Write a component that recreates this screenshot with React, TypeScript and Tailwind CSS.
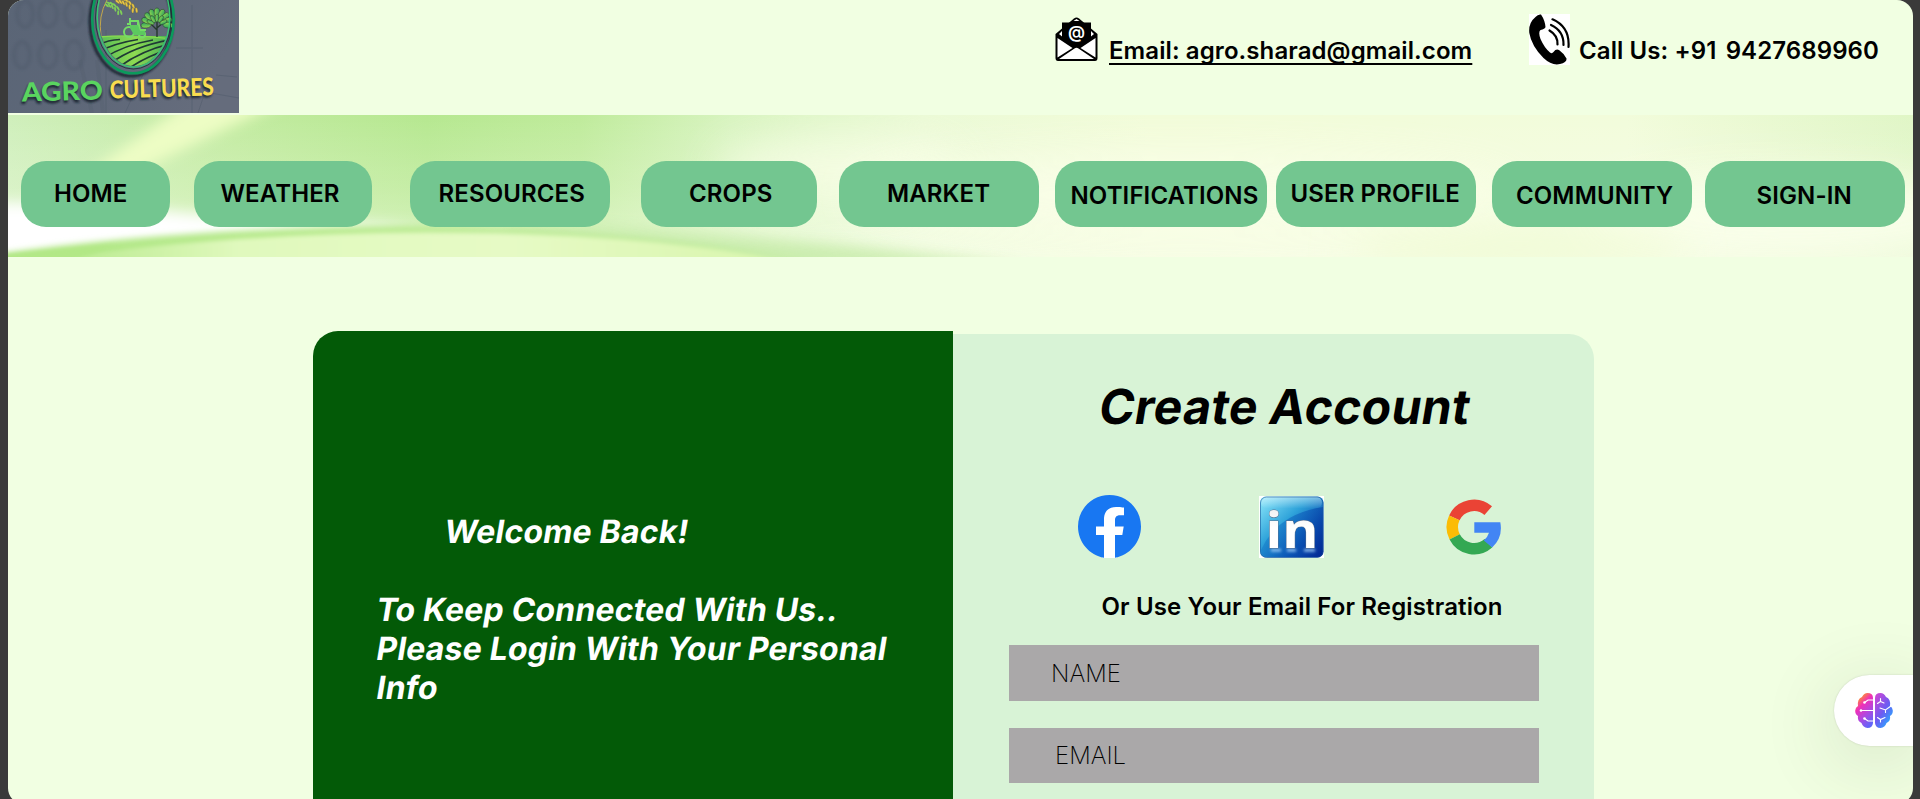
import React from "react";

type NavItem = { label: string; box: string };

const navItems: NavItem[] = [
  { label: "HOME", box: "w-[149px] ml-[13px] pl-[33px]" },
  { label: "WEATHER", box: "w-[178px] ml-[23.5px] pl-[27px]" },
  { label: "RESOURCES", box: "w-[200px] ml-[38px] pl-[29px]" },
  { label: "CROPS", box: "w-[176px] ml-[31.5px] pl-[48px]" },
  { label: "MARKET", box: "w-[200px] ml-[22px] pl-[48px]" },
  { label: "NOTIFICATIONS", box: "w-[212px] ml-[16px] pl-[15.5px] pt-[3px]" },
  { label: "USER PROFILE", box: "w-[200px] ml-[9px] pl-[14.5px]" },
  { label: "COMMUNITY", box: "w-[200px] ml-[16px] pl-[24px] pt-[3px]" },
  { label: "SIGN-IN", box: "w-[200px] ml-[12.5px] pl-[52px] pt-[3px]" },
];

function Logo() {
  return (
    <svg width="231" height="113" viewBox="8 0 231 113" className="block shrink-0">
      <defs>
        <linearGradient id="slate" x1="0" x2="1" y1="0" y2="0.3">
          <stop offset="0" stopColor="#5a6576" />
          <stop offset="0.5" stopColor="#5d6778" />
          <stop offset="1" stopColor="#656c7c" />
        </linearGradient>
        <linearGradient id="leaf" x1="0" x2="1">
          <stop offset="0" stopColor="#8fd653" />
          <stop offset="1" stopColor="#2fa35b" />
        </linearGradient>
        <linearGradient id="field" x1="0" x2="1">
          <stop offset="0" stopColor="#52b957" />
          <stop offset="0.5" stopColor="#8edb52" />
          <stop offset="1" stopColor="#3fa955" />
        </linearGradient>
        <clipPath id="oval">
          <ellipse cx="134" cy="16" rx="35.500" ry="50" />
        </clipPath>
        <filter id="soft" x="-20%" y="-20%" width="140%" height="140%">
          <feGaussianBlur stdDeviation="1.3" />
        </filter>
      </defs>
      <rect x="8" width="231" height="113" fill="url(#slate)" />
      <g fill="none" stroke="#4f5a6a" strokeWidth="4" opacity="0.35" filter="url(#soft)">
        <ellipse cx="25" cy="14" rx="8" ry="13" />
        <ellipse cx="48" cy="14" rx="9" ry="13" />
        <ellipse cx="74" cy="14" rx="9" ry="13" />
        <ellipse cx="22" cy="55" rx="8" ry="13" />
        <ellipse cx="48" cy="55" rx="9" ry="13" />
        <ellipse cx="74" cy="55" rx="9" ry="14" />
      </g>
      <g stroke="#4b5868" fill="none" opacity="0.4">
        <path d="M106 30V113M176 48H203M192 5V113M125 113L145 70M198 113L205 92L239 98M216 75L237 77" />
        <path d="M80 60L92 113M97 60L103 113" strokeWidth="4" opacity="0.4" />
      </g>
      <ellipse cx="131" cy="22" rx="41" ry="54" fill="none" stroke="#1e2833" strokeWidth="3" filter="url(#soft)" />
      <g clipPath="url(#oval)">
        <path d="M96 36H173V72H96Z" fill="url(#field)" />
        <g fill="none" stroke="#1f3a35" strokeWidth="1.700">
          <path d="M98 45Q108 40 120 39.500" />
          <path d="M98 52Q115 43 138 39.500" />
          <path d="M104 58Q124 45 153 40" />
          <path d="M111 63Q134 46 172 39.500" />
          <path d="M119 67Q142 50 174 43" />
          <path d="M128 69Q148 55 174 48" />
        </g>
        <path d="M98 37Q135 34 173 39" stroke="#86da4f" strokeWidth="1.4" fill="none" />
        <path d="M101 36Q98 16 107 0" stroke="#c3a74b" strokeWidth="1" fill="none" />
      </g>
      <g fill="none" stroke="#74dd66" strokeWidth="2">
        <circle cx="129" cy="32" r="5" />
        <circle cx="142" cy="34.5" r="3" />
        <path d="M130 18V24H127M130 21V18M129 21H138L140 30H146M138 21V30M134 32H139" />
      </g>
      <path d="M130 25H138L140 31H145V35H134L130 28Z" fill="#5cc95f" />
      <path d="M157 37V20M157 30L149 22M157 28L166 20" stroke="#26382d" strokeWidth="1.4" />
      <g fill="url(#leaf)" stroke="#26382d" strokeWidth="0.5">
        {[-96, -72, -48, -24, 0, 24, 48, 72, 96].map((a) => (
          <ellipse key={a} cx="157" cy="13" rx="2.8" ry="5" transform={`rotate(${a} 157 24)`} />
        ))}
        {[-66, -33, 0, 33, 66].map((a) => (
          <ellipse key={a} cx="157" cy="18" rx="1.9" ry="4" transform={`rotate(${a} 157 25)`} />
        ))}
      </g>
      <g fill="#e9c644" stroke="#5b5a3c" strokeWidth="0.3">
        {[0, 1, 2, 3, 4, 5].map((i) => (
          <g key={i} transform={`translate(${119 + i * 3.2} ${0 + i * i * 0.42}) rotate(${i * 11})`}>
            <ellipse cx="0" cy="-1.6" rx="2.8" ry="1.2" transform="rotate(25)" />
            <ellipse cx="0" cy="2.2" rx="2.8" ry="1.2" transform="rotate(40)" />
          </g>
        ))}
      </g>
      <g fill="#7fcf58">
        {[0, 1, 2, 3, 4].map((i) => (
          <g key={i} transform={`translate(${108 + i * 3} ${4 + i * i * 0.55}) rotate(${i * 13})`}>
            <ellipse cx="0" cy="-1.2" rx="2.6" ry="1" transform="rotate(20)" />
            <ellipse cx="0" cy="1.8" rx="2.6" ry="1" transform="rotate(40)" />
          </g>
        ))}
      </g>
      <ellipse cx="133" cy="19" rx="40.800" ry="54.300" fill="none" stroke="#0b9a5c" strokeWidth="2.6" />
      <ellipse cx="133.3" cy="18" rx="37.800" ry="51" fill="none" stroke="#1c2b35" strokeWidth="0.8" />
      <ellipse cx="133.500" cy="17" rx="36.300" ry="50" fill="none" stroke="#36c873" strokeWidth="1.400" />
      <g className="font-['Lato'] font-black" fontWeight="900" fontSize="26">
        <g fill="#1d2630" filter="url(#soft)">
          <text x="21" y="104" textLength="82" lengthAdjust="spacingAndGlyphs" transform="rotate(-1.5 21 104)">AGRO</text>
          <text x="109" y="100.500" textLength="104" fontSize="24" lengthAdjust="spacingAndGlyphs" transform="rotate(-1.800 109 101)">CULTURES</text>
        </g>
        <text x="22" y="101.500" fill="#5ad45f" textLength="81" lengthAdjust="spacingAndGlyphs" transform="rotate(-1.500 22 101.500)">AGRO</text>
        <text x="110" y="98.500" fill="#f9dc4f" fontSize="24.500" textLength="104" lengthAdjust="spacingAndGlyphs" transform="rotate(-1.800 110 98.500)">CULTURES</text>
      </g>
    </svg>
  );
}

function MailIcon() {
  return (
    <svg width="43" height="44" viewBox="0 0 43 44" className="block shrink-0">
      <path d="M0.500 17L19 1.500Q21.500-0.500 24 1.500L42.500 17V41Q42.500 44 40 44H3Q0.500 44 0.500 41Z" fill="#000" />
      <path d="M2.500 21L17.500 31L2.500 40.500ZM40.500 21L25.500 31L40.500 40.500ZM4 42L19.500 31.500Q21.500 30 23.500 31.500L39 42ZM18.500 4L21.500 2L24.500 4ZM4 17L7 14V19.500ZM39 17L36 14V19.500Z" fill="#fff" />
      <path d="M7 5.500H36V20L25 27.500Q21.500 29.500 18 27.500L7 20Z" fill="#000" />
      <text x="21.500" y="21" textAnchor="middle" fill="#fff" fontSize="17" fontWeight="600" className="font-['Inter']">@</text>
    </svg>
  );
}

function PhoneIcon() {
  return (
    <svg width="41" height="51" viewBox="0 0 41 51" className="block shrink-0 bg-white">
      <path d="M6.500 3Q9 0 12 0.500Q16 6.500 16.500 13Q16 15 11.500 16Q9 18 11.500 25Q15.500 34 21 38.500Q23 40 24.500 38Q27 34.500 30 36Q35 39.500 37.500 44.500Q38 48.500 31 50Q23 52 14.500 44Q2.500 32 0.300 19Q-0.800 9 6.500 3Z" />
      <g fill="none" stroke="#000" strokeWidth="2.200" strokeLinecap="round">
        <path d="M20.500 16.500Q29 21.500 28.500 30.500" />
        <path d="M22 11Q35 17 34.500 31" />
        <path d="M23.500 5.300Q41 13 39.500 33" />
      </g>
    </svg>
  );
}

function BandBackdrop() {
  return (
    <svg className="absolute inset-0 h-full w-full" viewBox="0 0 1905 142" preserveAspectRatio="none">
      <defs>
        <linearGradient id="base">
          <stop offset="0" stopColor="#cfefbb" />
          <stop offset="0.12" stopColor="#c2eba0" />
          <stop offset="0.22" stopColor="#b6e890" />
          <stop offset="0.3" stopColor="#bfeb9b" />
          <stop offset="0.38" stopColor="#d8f4c0" />
          <stop offset="0.48" stopColor="#ebfad6" />
          <stop offset="0.6" stopColor="#f2fcd9" />
          <stop offset="0.85" stopColor="#f2fcdb" />
          <stop offset="1" stopColor="#e0f6c6" />
        </linearGradient>
        <linearGradient id="fade" x1="0" x2="0" y1="0" y2="1">
          <stop offset="0" stopColor="#fff" stopOpacity="0" />
          <stop offset="0.5" stopColor="#fbfff0" stopOpacity="0.22" />
          <stop offset="1" stopColor="#fbfff0" stopOpacity="0.5" />
        </linearGradient>
        <linearGradient id="hill" x1="0" x2="1">
          <stop offset="0" stopColor="#b5e98a" />
          <stop offset="0.25" stopColor="#e0f9bd" />
          <stop offset="0.6" stopColor="#e6fac5" />
          <stop offset="1" stopColor="#d8f6ab" />
        </linearGradient>
        <linearGradient id="ridge" x1="0" x2="1">
          <stop offset="0" stopColor="#b0e784" />
          <stop offset="0.45" stopColor="#bbeb92" />
          <stop offset="0.8" stopColor="#c3eca0" />
          <stop offset="1" stopColor="#cdeeb2" />
        </linearGradient>
        <filter id="b6" x="-30%" y="-60%" width="160%" height="220%"><feGaussianBlur stdDeviation="7" /></filter>
        <filter id="b3" x="-10%" y="-40%" width="120%" height="180%"><feGaussianBlur stdDeviation="3" /></filter>
        <filter id="b2" x="-10%" y="-60%" width="120%" height="220%"><feGaussianBlur stdDeviation="2.200" /></filter>
        <filter id="b20" x="-50%" y="-150%" width="200%" height="400%"><feGaussianBlur stdDeviation="20" /></filter>
      </defs>
      <rect width="1905" height="142" fill="url(#base)" />
      <rect width="1905" height="142" fill="url(#fade)" />
      <path d="M60 72L190-20H290L205 20L140 52L100 80Z" fill="#edfdc4" filter="url(#b6)" />
      <path d="M-40 88Q60 86 190 99Q300 106 420 112L120 135L-40 170Z" fill="#ffffff" filter="url(#b6)" />
      <ellipse cx="830" cy="55" rx="120" ry="32" fill="#fafee8" opacity="0.7" filter="url(#b20)" />
      <ellipse cx="1180" cy="80" rx="330" ry="38" fill="#fbfee9" opacity="0.8" filter="url(#b20)" />
      <ellipse cx="1780" cy="100" rx="200" ry="40" fill="#fbffec" opacity="0.9" filter="url(#b20)" />
      <path d="M500 108Q750 116 1020 152H500Z" fill="#c8ecab" opacity="0.9" filter="url(#b6)" />
      <ellipse cx="1510" cy="135" rx="170" ry="16" fill="#effbd2" filter="url(#b20)" />
      <path d="M-10 139Q180 112 400 111Q620 113 860 152H-10Z" fill="url(#ridge)" filter="url(#b3)" />
      <path d="M40 145Q200 119 420 117.500Q570 118 670 130Q740 137 800 152H40Z" fill="url(#hill)" filter="url(#b2)" />
      <path d="M-5 140Q60 134 110 129L60 146H-5Z" fill="#b2e886" filter="url(#b2)" />
    </svg>
  );
}

function FacebookIcon() {
  return (
    <svg width="63" height="63" viewBox="0 0 63 63" className="block">
      <path d="M24 30H39V63H24Z" fill="#fff" />
      <circle cx="31.500" cy="31.500" r="30" fill="#fff" />
      <path d="M63 31.500C63 14.100 48.900 0 31.500 0S0 14.100 0 31.500C0 47.200 11.500 60.300 26 62.700V40H18V31.500H26V24.500C26 16.500 30.500 12 38 12C41.500 12 46 12.600 46 12.600V20.300H42C38.200 20.300 37 22.600 37 25.200V31.500H45.700L44.300 40H37V62.700C51.500 60.300 63 47.200 63 31.500Z" fill="#1877f2" />
    </svg>
  );
}

function LinkedInIcon() {
  return (
    <svg width="65" height="62" viewBox="0 0 65 62" className="block overflow-visible bg-white">
      <defs>
        <linearGradient id="li" x1="0" y1="0" x2="1" y2="1">
          <stop offset="0" stopColor="#8feafc" />
          <stop offset="0.4" stopColor="#2fa3da" />
          <stop offset="0.7" stopColor="#0c55b4" />
          <stop offset="1" stopColor="#012390" />
        </linearGradient>
        <linearGradient id="liDeep" x1="0" y1="0.700" x2="1" y2="1">
          <stop offset="0" stopColor="#1784cc" />
          <stop offset="0.5" stopColor="#0a55b6" />
          <stop offset="1" stopColor="#012493" />
        </linearGradient>
        <linearGradient id="gloss" x1="0" y1="0" x2="0" y2="1">
          <stop offset="0" stopColor="#fff" stopOpacity="0.450" />
          <stop offset="1" stopColor="#fff" stopOpacity="0" />
        </linearGradient>
        <linearGradient id="letters" x1="0" y1="0" x2="0" y2="1">
          <stop offset="0" stopColor="#e4e4e8" />
          <stop offset="0.5" stopColor="#fff" />
        </linearGradient>
        <filter id="glow" x="-20%" y="-300%" width="140%" height="700%" filterUnits="objectBoundingBox"><feGaussianBlur stdDeviation="1.500" /></filter>
      </defs>
      <rect x="1" y="0.500" width="63.500" height="61" rx="6" fill="url(#li)" />
      <path d="M2 54Q18 18 64 11V55Q64 61 58 61H8Q2 61 2 54Z" fill="url(#liDeep)" opacity="0.6" />
      <rect x="2" y="0.500" width="61" height="12" rx="6" fill="url(#gloss)" />
      <rect x="1.500" y="1" width="62.500" height="60.500" rx="6" fill="none" stroke="#1c5a9c" strokeOpacity="0.600" />
      <path d="M12 53H22V55.500H12ZM28 53H37V55.500H28ZM45 53H56V55.500H45Z" fill="#9ccaf5" filter="url(#glow)" />
      <text x="6.500" y="51.800" fontSize="51" fontWeight="700" textLength="53" lengthAdjust="spacingAndGlyphs" fill="url(#letters)" stroke="#5b6f8c" strokeWidth="0.900" className="font-['Open_Sans'] [paint-order:stroke]">in</text>
    </svg>
  );
}

function GoogleIcon() {
  return (
    <svg width="56" height="56" viewBox="-28 -28 56 56" className="block">
      <g fill="none" strokeWidth="11.500">
        <path d="M14.240 -16.380A21.700 21.700 0 0 0 -19.670 -9.170" stroke="#ea4335" />
        <path d="M-19.670 -9.170A21.700 21.700 0 0 0 -19.330 9.850" stroke="#fbbc05" />
        <path d="M-19.330 9.850A21.700 21.700 0 0 0 14.380 16.250" stroke="#34a853" />
      </g>
      <path d="M0.300 -4.700H26.300A27.500 27.500 0 0 1 18.200 20.600L9.800 13.500A16 16 0 0 0 15 5.800H0.300Z" fill="#4285f4" />
    </svg>
  );
}

function BrainIcon() {
  return (
    <svg width="38" height="35" viewBox="0 0 38 35" className="block">
      <defs>
        <linearGradient id="bl" x1="0.200" y1="0" x2="0.700" y2="1">
          <stop offset="0.080" stopColor="#ff9a1f" />
          <stop offset="0.350" stopColor="#f030b8" />
          <stop offset="0.650" stopColor="#b048e0" />
          <stop offset="1" stopColor="#5f66fa" />
        </linearGradient>
        <linearGradient id="br" x1="0.100" y1="0" x2="0.900" y2="1">
          <stop offset="0" stopColor="#cf46d4" />
          <stop offset="0.500" stopColor="#6c5cf2" />
          <stop offset="0.900" stopColor="#28aaff" />
        </linearGradient>
      </defs>
      <path d="M12.500 0Q18 0 18 5V30Q17.500 35 12.500 35Q8 34.500 6.500 30Q2 28 3 23Q0 21 0.200 17.500Q0.500 14 3 13Q2 6 7 4Q9 0 12.500 0Z" fill="url(#bl)" />
      <path d="M25.500 0Q20 0 20 5V30Q20.500 35 25.500 35Q30 34.500 31.500 30Q36 28 35 23Q38 21 37.800 17.500Q37.500 14 35 13Q36 6 31 4Q29 0 25.500 0Z" fill="url(#br)" />
      <g fill="none" stroke="#fff" strokeWidth="1.100" strokeLinecap="round">
        <path d="M18 7H13L9.500 9.500M18 17.500H6M18 28H13L9.500 25.500M25.500 5.500V8.500L22.500 10.500M25.500 8.500L29 10M25 15L30.500 17L36 13M30.500 17V19.500M22.500 24.500L25.500 26.500L30 24.500M25.500 26.500V29" />
      </g>
      <g fill="#fff"><circle cx="9.500" cy="9.500" r="1.300" /><circle cx="6" cy="17.500" r="1.300" /><circle cx="9.500" cy="25.500" r="1.300" /></g>
    </svg>
  );
}

export default function App() {
  return (
    <div className="h-[799px] w-[1920px] overflow-hidden bg-[#3a3a3a] pl-2 font-['Inter',sans-serif] text-2xl text-black">
      <div className="relative h-[804px] w-[1905px] overflow-hidden rounded-2xl bg-[#f1ffe2]">
        <header className="flex h-[115px] items-start">
          <Logo />
          <div className="ml-[816px] mt-[17px]"><MailIcon /></div>
          <a className="ml-[11px] mt-[36px] w-[363px] whitespace-nowrap font-semibold leading-[30px] tracking-[0.09px] underline decoration-[1.5px] underline-offset-[4px] [text-decoration-skip-ink:none]">
            Email: agro.sharad@gmail.com
          </a>
          <div className="ml-[57px] mt-[14px]"><PhoneIcon /></div>
          <span className="ml-[9px] mt-[36px] whitespace-nowrap font-semibold leading-[30px] tracking-[0.1px]">
            Call Us: +91 <span className="ml-[3px]">9427689960</span>
          </span>
        </header>

        <nav className="relative h-[142px] overflow-hidden">
          <BandBackdrop />
          <div className="relative flex pt-[46px]">
            {navItems.map((item) => (
              <button
                key={item.label}
                className={`flex h-[66px] shrink-0 items-center whitespace-nowrap rounded-[25px] bg-[#73c690] font-semibold tracking-[0.12px] ${item.box}`}
              >
                {item.label}
              </button>
            ))}
          </div>
        </nav>

        <main className="flex items-start pl-[305px] pt-[74px]">
          <section className="h-[480px] w-[640px] shrink-0 rounded-tl-[25px] bg-[#035a07] pl-[62px] pt-[181px] text-[32px] font-bold leading-[39px] tracking-[0.18px] text-white">
            <p className="origin-[0_31px] -skew-x-[9.4deg] pl-[68px]">Welcome Back!</p>
            <p className="mt-[39px] origin-[0_31px] -skew-x-[9.4deg]">To Keep Connected With Us..</p>
            <p className="origin-[0_31px] -skew-x-[9.4deg]">Please Login With Your Personal</p>
            <p className="origin-[0_31px] -skew-x-[9.4deg]">Info</p>
          </section>
          <section className="mt-[3px] h-[480px] w-[641px] shrink-0 rounded-tr-[25px] bg-[#d8f3d6] pl-[56px]">
            <h1 className="ml-[88px] mt-[44px] origin-[0_46px] -skew-x-[9.4deg] text-[48px] font-bold leading-[58px] tracking-[0.35px]">Create Account</h1>
            <div className="flex items-start pl-[69px] pt-[59px]">
              <FacebookIcon />
              <div className="ml-[118px] mt-px"><LinkedInIcon /></div>
              <div className="ml-[122px] mt-[4px]"><GoogleIcon /></div>
            </div>
            <p className="pl-[92.5px] pt-[34px] font-semibold leading-[29px] tracking-[0.14px]">Or Use Your Email For Registration</p>
            <div className="mt-[24px] flex h-[56px] w-[530px] items-center bg-[#aaa8a9] pl-[42px] pt-px font-extralight">NAME</div>
            <div className="mt-[27px] flex h-[55px] w-[530px] items-center bg-[#aaa8a9] pl-[46px] pt-px font-extralight">EMAIL</div>
          </section>
        </main>

        <aside className="absolute right-0 top-[675px] flex h-[71px] w-[79px] items-center rounded-l-full bg-white pl-[21px] shadow-[0_0_2px_rgba(0,0,0,0.15),0_14px_70px_10px_rgba(60,70,50,0.11)]">
          <BrainIcon />
        </aside>
      </div>
    </div>
  );
}
